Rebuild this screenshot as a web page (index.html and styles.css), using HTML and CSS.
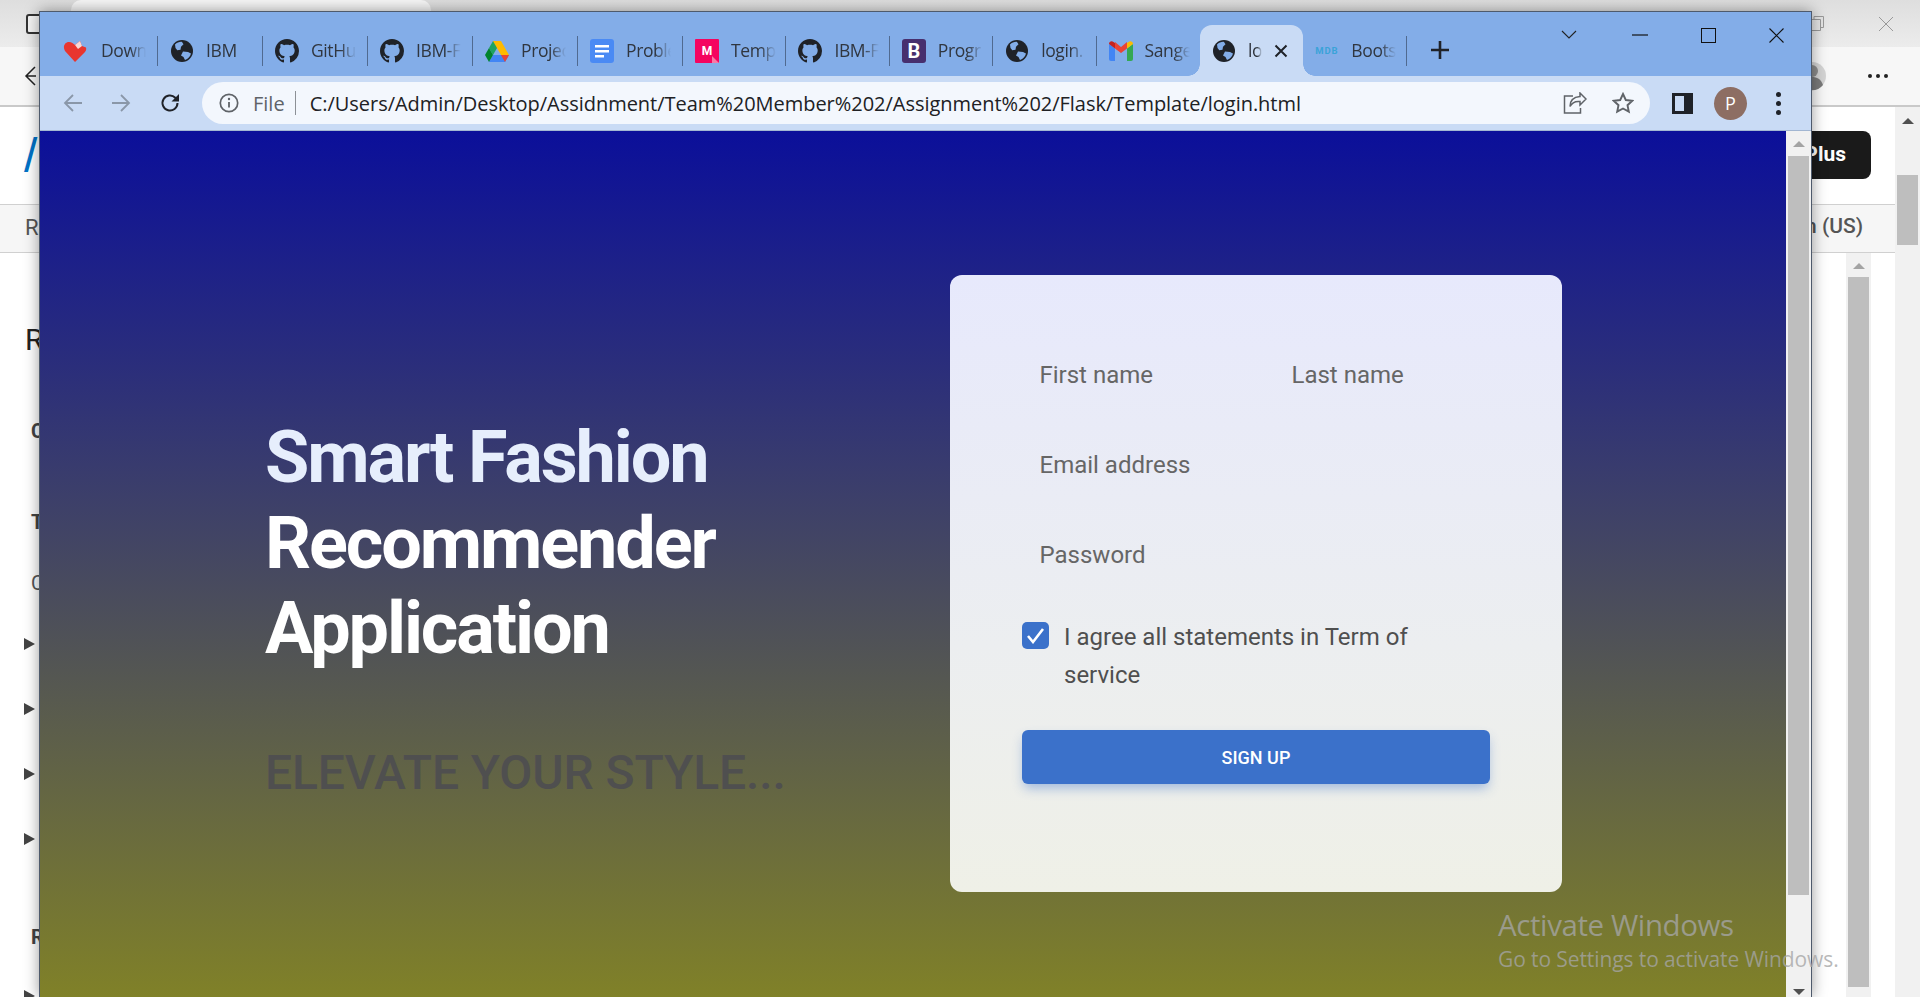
FILE: index.html
```html
<!DOCTYPE html>
<html lang="en">
<head>
  <meta charset="UTF-8" />
  <title>login.html</title>
  <link rel="stylesheet" href="styles.css">
</head>
<body>
  <svg class="defs" width="0" height="0">
    <symbol id="globe" viewBox="0 0 24 24">
      <circle cx="12" cy="12" r="11" fill="#1f2228"/>
      <path d="M5 5.500c2-2 5-3 7-2.600l1.500 2.400-2.500 2.400-.5 3-3.200.5L5.500 9z" fill="#83ade8"/>
      <path d="M13 12.500l5 .5 3 1.500c-.8 3-3 5.500-6 6.500l-1.500-3-2.500-1.500z" fill="#83ade8"/>
    </symbol>
    <symbol id="github" viewBox="0 0 16 16">
      <path fill="#1f2228" d="M8 0C3.580 0 0 3.580 0 8c0 3.540 2.290 6.530 5.470 7.590.4.070.55-.17.55-.38 0-.19-.01-.82-.01-1.490-2.010.37-2.530-.49-2.690-.94-.09-.23-.48-.94-.82-1.130-.28-.15-.68-.52-.01-.53.63-.01 1.080.58 1.230.82.720 1.210 1.870.87 2.330.66.070-.52.28-.87.510-1.070-1.780-.2-3.640-.89-3.640-3.950 0-.87.31-1.590.82-2.150-.08-.2-.36-1.020.08-2.120 0 0 .67-.21 2.200.82.640-.18 1.320-.27 2-.27s1.360.09 2 .27c1.530-1.040 2.200-.82 2.200-.82.440 1.100.16 1.920.08 2.120.51.56.82 1.270.82 2.150 0 3.070-1.870 3.750-3.650 3.950.29.25.54.73.54 1.480 0 1.070-.01 1.930-.01 2.200 0 .21.15.46.55.38A8.010 8.010 0 0 0 16 8c0-4.420-3.580-8-8-8z"/>
    </symbol>
  </svg>

  <div class="desk">
    <!-- window behind -->
    <div class="back">
      <div class="back-top">
        <div class="back-panel-icon"></div>
        <div class="back-tab"></div>
        <svg class="back-restore" width="13" height="15" viewBox="0 0 13 15"><path d="M.5 3.500h9v11h-9zM3 3.500V.5h9.500v11H9.500" fill="none" stroke="#999"/></svg>
        <svg class="back-close" width="16" height="16" viewBox="0 0 16 16"><path d="M1 1l14 14M15 1L1 15" stroke="#999" stroke-width="1"/></svg>
      </div>
      <div class="back-toolbar">
        <svg width="12" height="20" viewBox="0 0 12 20"><path d="M11 1L2 10l9 9M2 10h10" fill="none" stroke="#222" stroke-width="1.500"/></svg>
        <div class="back-right">
          <svg width="28" height="36" viewBox="0 0 28 36"><circle cx="14" cy="18" r="14" fill="#d4d4d4"/><circle cx="14" cy="13" r="6" fill="#8c8c8c"/><path d="M3 27c2-6 6-8 11-8s9 2 11 8a14 14 0 0 1-22 0z" fill="#7a7a7a"/></svg>
          <div class="back-dots"><i></i><i></i><i></i></div>
        </div>
      </div>
      <div class="back-body">
        <div class="back-content">
          <div class="back-header">
            <span class="back-logo">/</span>
            <span class="back-plus">Plus</span>
          </div>
          <div class="back-sub">
            <span>R</span>
            <span class="back-lang">n (US)</span>
          </div>
          <div class="back-main">
            <div class="back-article">
              <div class="art-title">R</div>
              <div class="art-head mt-c">C</div>
              <div class="art-head mt-t">T</div>
              <div class="art-text">C</div>
              <div class="art-tri first"></div>
              <div class="art-tri"></div>
              <div class="art-tri"></div>
              <div class="art-tri"></div>
              <div class="art-head mt-r">R</div>
              <div class="art-tri last"></div>
            </div>
            <div class="back-inner-scroll">
              <span class="arrow-up light"></span>
              <div class="inner-thumb"></div>
            </div>
            <div class="back-gutter"></div>
          </div>
        </div>
        <div class="back-scroll">
          <span class="arrow-up dark"></span>
          <div class="back-thumb"></div>
        </div>
      </div>
    </div>

    <!-- chrome window -->
    <div class="win">
      <div class="strip">
        <div class="tab">
          <svg class="fav fav-heart" viewBox="0 0 24 24"><path d="M12 23L2 12C-.5 8 1.500 3 6 3c2.500 0 4.500 1.500 6 3l5-4 2 5 4 1.500c.5 2 0 3-1 4.500z" fill="#e8352e"/><path d="M12 6l5-4 2 5-4 3z" fill="#f8d7d5"/></svg>
          <span class="tab-title">Down</span>
        </div>
        <div class="tab"><svg class="fav"><use href="#globe"/></svg><span class="tab-title">IBM</span></div>
        <div class="tab"><svg class="fav"><use href="#github"/></svg><span class="tab-title">GitHu</span></div>
        <div class="tab"><svg class="fav"><use href="#github"/></svg><span class="tab-title">IBM-F</span></div>
        <div class="tab">
          <svg class="fav" viewBox="0 0 24 22"><path d="M8 1h8l-8 14-4-7z" fill="#1ea362"/><path d="M16 1l8 14h-8L8 1z" fill="#ffba00"/><path d="M8 15h16l-4 7H4z" fill="#4285f4"/><path d="M0 15l4-7 4 7-4 7z" fill="#00832d"/><path d="M16 15h8l-4 7z" fill="#ea4335"/></svg>
          <span class="tab-title">Projec</span>
        </div>
        <div class="tab">
          <svg class="fav" viewBox="0 0 24 24"><rect width="24" height="24" rx="3" fill="#4a8af4"/><path d="M5 6h14v2.500H5zM5 11h14v2.500H5zM5 16h9v2.500H5z" fill="#fff"/></svg>
          <span class="tab-title">Proble</span>
        </div>
        <div class="tab">
          <span class="fav-box fav-mural">M</span>
          <span class="tab-title">Temp</span>
        </div>
        <div class="tab"><svg class="fav"><use href="#github"/></svg><span class="tab-title">IBM-F</span></div>
        <div class="tab">
          <span class="fav-box fav-boot">B</span>
          <span class="tab-title">Progr</span>
        </div>
        <div class="tab"><svg class="fav"><use href="#globe"/></svg><span class="tab-title">login.</span></div>
        <div class="tab no-sep">
          <svg class="fav" viewBox="0 0 24 20"><path d="M2 20a2 2 0 0 1-2-2V3l6 4.500V20z" fill="#4285f4"/><path d="M18 20V7.500L24 3v15a2 2 0 0 1-2 2z" fill="#34a853"/><path d="M6 7.500L12 12l6-4.500V1l-6 5-6-5z" fill="#ea4335"/><path d="M0 3c0-2.500 2.800-3.500 4.500-2L6 2v5.500z" fill="#c5221f"/><path d="M18 2l1.500-1C21.200-.5 24 .5 24 3l-6 4.500z" fill="#fbbc04"/></svg>
          <span class="tab-title">Sange</span>
        </div>
        <div class="tab active">
          <svg class="fav"><use href="#globe"/></svg>
          <span class="tab-title short">lo</span>
          <svg class="tab-x" width="14" height="14" viewBox="0 0 14 14"><path d="M1.500 1.500l11 11M12.500 1.500l-11 11" stroke="#1f2228" stroke-width="2"/></svg>
        </div>
        <div class="tab">
          <span class="fav-mdb">MDB</span>
          <span class="tab-title">Boots</span>
        </div>
        <svg class="newtab" width="18" height="18" viewBox="0 0 18 18"><path d="M9 0v18M0 9h18" stroke="#1f2228" stroke-width="2.600"/></svg>
        <div class="controls">
          <div class="ctl ctl-chev"><svg width="16" height="10" viewBox="0 0 16 10"><path d="M1 1l7 7 7-7" fill="none" stroke="#222" stroke-width="1.100"/></svg></div>
          <div class="ctl"><svg width="16" height="2" viewBox="0 0 16 2"><path d="M0 1h16" stroke="#111" stroke-width="1.200"/></svg></div>
          <div class="ctl"><svg width="15" height="15" viewBox="0 0 15 15"><rect x=".5" y=".5" width="14" height="14" fill="none" stroke="#111"/></svg></div>
          <div class="ctl"><svg width="15" height="15" viewBox="0 0 15 15"><path d="M.5.5l14 14M14.500.5l-14 14" stroke="#111" stroke-width="1.100"/></svg></div>
        </div>
      </div>

      <div class="toolbar">
        <div class="nav-btns">
          <svg width="20" height="20" viewBox="0 0 20 20"><path d="M19 10H2M10 2l-8 8 8 8" fill="none" stroke="#8a97a8" stroke-width="1.800"/></svg>
          <svg width="20" height="20" viewBox="0 0 20 20"><path d="M1 10h17M10 2l8 8-8 8" fill="none" stroke="#8a97a8" stroke-width="1.800"/></svg>
          <svg width="22" height="22" viewBox="0 0 22 22"><path d="M18.500 11a7.500 7.500 0 1 1-2.200-5.300L19 8.200" fill="none" stroke="#1f2228" stroke-width="2"/><path d="M20 2v7.500h-7.500z" fill="#1f2228"/></svg>
        </div>
        <div class="omni">
          <svg class="omni-info" width="20" height="20" viewBox="0 0 20 20"><circle cx="10" cy="10" r="8.700" fill="none" stroke="#5f6368" stroke-width="1.700"/><path d="M10 9v5.500" stroke="#5f6368" stroke-width="1.800"/><circle cx="10" cy="6" r="1.200" fill="#5f6368"/></svg>
          <span class="omni-file">File</span>
          <span class="omni-sep"></span>
          <span class="omni-url">C:/Users/Admin/Desktop/Assidnment/Team%20Member%202/Assignment%202/Flask/Template/login.html</span>
          <svg class="omni-share" width="24" height="22" viewBox="0 0 24 22"><path d="M17 1l6 6-6 6V9.500c-4-.5-8 1-10 5 0-6 4-9.500 10-10zM10 4H1.500v17h16v-5" fill="none" stroke="#5f6368" stroke-width="1.500"/></svg>
          <svg class="omni-star" width="22" height="22" viewBox="0 0 22 22"><path d="M11 2l2.800 6 6.500.8-4.800 4.400 1.300 6.500L11 16.500l-5.800 3.200 1.300-6.500-4.800-4.400L8.200 8z" fill="none" stroke="#5f6368" stroke-width="1.900"/></svg>
        </div>
        <div class="tool-right">
          <svg width="21" height="21" viewBox="0 0 21 21"><path d="M0 0h21v21H0zM3 3v15h9V3z" fill="#1f2228" fill-rule="evenodd"/></svg>
          <span class="avatar">P</span>
          <div class="kebab"><i></i><i></i><i></i></div>
        </div>
      </div>

      <div class="viewport">
        <main class="page">
          <section class="hero">
            <h1 class="hero-title"><span class="hero-first">Smart Fashion</span><br>Recommender<br>Application</h1>
            <h2 class="hero-sub">ELEVATE YOUR STYLE...</h2>
          </section>
          <form class="card">
            <div class="row-two">
              <input class="field" type="text" placeholder="First name">
              <input class="field" type="text" placeholder="Last name">
            </div>
            <input class="field" type="email" placeholder="Email address">
            <input class="field" type="password" placeholder="Password">
            <div class="agree">
              <span class="check"><svg width="19" height="17" viewBox="0 0 19 17"><path d="M2 9l5 6L17 2" fill="none" stroke="#fff" stroke-width="2.600"/></svg></span>
              <span class="agree-text">I agree all statements in Term of service</span>
            </div>
            <button class="signup" type="button">Sign up</button>
          </form>
        </main>
        <div class="page-scroll">
          <span class="arrow-up light"></span>
          <div class="page-thumb"></div>
          <span class="arrow-down"></span>
        </div>
      </div>
    </div>

    <div class="activate">
      <div class="activate-big">Activate Windows</div>
      <div class="activate-small">Go to Settings to activate Windows.</div>
    </div>
  </div>
</body>
</html>
```

FILE: styles.css
```css
* { box-sizing: border-box; }
html, body { margin: 0; height: 100%; overflow: hidden; }
body { font-family: Roboto, sans-serif; background: #fff; }
.defs { position: absolute; }
.desk { position: relative; width: 1920px; height: 997px; overflow: hidden; }

/* window behind */
.back { height: 997px; display: flex; flex-direction: column; background: #fff; }
.back-top { height: 47px; flex: none; display: flex; background: linear-gradient(#dedede, #ececec); position: relative; }
.back-panel-icon { width: 20px; height: 20px; margin: 14px 0 0 26px; border: 2px solid #333; border-radius: 3px; background: #f4f4f4; }
.back-tab { width: 360px; height: 47px; margin-left: 25px; background: #f6f6f6; border-radius: 10px 10px 0 0; }
.back-restore { margin: 16px 0 0 1380px; }
.back-close { margin: 16px 0 0 54px; }
.back-toolbar { height: 60px; flex: none; display: flex; align-items: center; justify-content: space-between; padding: 0 32px 0 24px; background: #f7f7f7; border-bottom: 2px solid #c9c9c9; }
.back-right { display: flex; align-items: center; gap: 42px; }
.back-dots { display: flex; gap: 4px; }
.back-dots i { width: 4px; height: 4px; border-radius: 50%; background: #222; }
.back-body { flex: 1; display: flex; min-height: 0; }
.back-content { flex: 1; display: flex; flex-direction: column; min-width: 0; }
.back-header { height: 97px; flex: none; display: flex; align-items: center; justify-content: space-between; padding: 0 24px; }
.back-logo { font: 48px "Liberation Sans", sans-serif; color: #0072c6; }
.back-plus { width: 120px; height: 48px; margin-top: -1px; padding: 0 25px 2px 0; display: flex; align-items: center; justify-content: flex-end; background: #1a1a1a; color: #fff; font-size: 21px; font-weight: 700; border-radius: 8px; }
.back-sub { height: 49px; flex: none; display: flex; align-items: center; justify-content: space-between; padding: 0 32px 3px 25px; background: #f6f6f6; border-top: 1px solid #d0d0d0; border-bottom: 1px solid #d0d0d0; color: #555; font-size: 22px; }
.back-lang { font-size: 21px; font-weight: 500; margin-bottom: 2px; }
.back-main { flex: 1; display: flex; min-height: 0; }
.back-article { flex: 1; padding-left: 24px; }
.art-title { margin: 67px 0 0 1px; font-size: 30px; line-height: 40px; color: #222; }
.art-head { margin-left: 7px; font-size: 20px; line-height: 30px; font-weight: 700; color: #444; }
.mt-c { margin-top: 56px; }
.mt-t { margin-top: 61px; }
.mt-r { margin-top: 77px; }
.art-text { margin: 31px 0 0 7px; font-size: 20px; line-height: 30px; color: #555; }
.art-tri { width: 0; height: 0; margin-top: 53px; border-left: 11px solid #444; border-top: 6px solid transparent; border-bottom: 6px solid transparent; }
.art-tri.first { margin-top: 40px; }
.art-tri.last { margin-top: 38px; }
.back-inner-scroll { width: 25px; flex: none; padding-top: 10px; display: flex; flex-direction: column; align-items: center; background: #f1f1f1; }
.inner-thumb { width: 21px; height: 710px; margin-top: 8px; background: #bebebe; }
.back-gutter { width: 24px; flex: none; }
.back-scroll { width: 25px; flex: none; padding-top: 11px; display: flex; flex-direction: column; align-items: center; background: #f1f1f1; }
.back-thumb { width: 21px; height: 70px; margin-top: 51px; background: #bebebe; }
.arrow-up { width: 0; height: 0; border-left: 6px solid transparent; border-right: 6px solid transparent; border-bottom: 6px solid #505050; }
.arrow-up.light { border-bottom-color: #a3a3a3; }
.arrow-down { width: 0; height: 0; margin-top: auto; margin-bottom: 2px; border-left: 6px solid transparent; border-right: 6px solid transparent; border-top: 6px solid #505050; }

/* browser window */
.win { position: absolute; left: 39px; top: 11px; width: 1773px; height: 986px; display: flex; flex-direction: column; border: 1px solid #4e5a6c; border-bottom: 0; box-shadow: 0 0 14px rgba(0,0,0,0.4); font-family: "Open Sans", sans-serif; }
.strip { height: 64px; flex: none; display: flex; align-items: flex-end; padding-left: 13px; background: #83ade8; }
.tab { position: relative; width: 103.400px; height: 51px; flex: none; display: flex; align-items: center; gap: 12px; padding-left: 12px; }
.tab:nth-child(-n+6) { width: 105px; }
.tab::after { content: ""; position: absolute; right: 0; top: 11px; height: 30px; width: 1px; background: #506a90; }
.tab.no-sep::after { display: none; }
.tab.active { background: #c9dbf5; border-radius: 12px 12px 0 0; }
.tab.active::before, .tab.active::after { content: ""; position: absolute; top: auto; bottom: 0; width: 12px; height: 12px; }
.tab.active::before { left: -12px; background: radial-gradient(circle at 0 0, transparent 11.500px, #c9dbf5 12px); }
.tab.active::after { right: -12px; background: radial-gradient(circle at 100% 0, transparent 11.500px, #c9dbf5 12px); }
.tab.active .tab-x { margin-left: auto; margin-right: 15px; }
.tab-x { flex: none; }
.fav { width: 24px; height: 24px; flex: none; }
.fav-heart { margin-left: -2px; margin-right: 2px; }
.tab-title { width: 45px; margin-top: -2px; overflow: hidden; white-space: nowrap; font-size: 17.500px; letter-spacing: -0.4px; color: #30363f; -webkit-mask-image: linear-gradient(90deg, #000 65%, transparent); mask-image: linear-gradient(90deg, #000 65%, transparent); }
.tab-title.short { width: 14px; }
.fav-box { position: relative; width: 24px; height: 24px; flex: none; display: flex; align-items: center; justify-content: center; border-radius: 3px; font-family: Roboto, sans-serif; font-weight: 700; color: #fff; }
.fav-mural { background: #f5045f; font-size: 12px; border-radius: 1px; }
.fav-mural::after { content: ""; position: absolute; right: 0; bottom: 0; border-left: 7px solid #f77aa6; border-top: 7px solid transparent; border-bottom: 0; }
.fav-boot { background: #472f6e; font-size: 20px; }
.fav-mdb { width: 24px; flex: none; font: 700 9.500px Roboto, sans-serif; letter-spacing: 0.8px; color: #3aa3d8; white-space: nowrap; }
.newtab { margin: 0 0 17px 24px; flex: none; }
.controls { display: flex; margin-left: auto; align-self: flex-start; margin-right: 1px; }
.ctl { width: 68px; height: 46px; display: flex; align-items: center; justify-content: center; }
.ctl-chev { width: 74px; }
.toolbar { height: 55px; flex: none; display: flex; align-items: center; background: #c9dbf5; border-bottom: 1px solid #a2b6d2; }
.nav-btns { display: flex; align-items: center; width: 162px; padding-left: 23px; gap: 28px; }
.omni { width: 1448px; height: 42px; display: flex; align-items: center; padding-left: 17px; border-radius: 21px; background: #f3f7fd; }
.omni-info { flex: none; }
.omni-file { margin-left: 14px; font-size: 20px; color: #5f6368; }
.omni-sep { width: 1px; height: 24px; margin: 0 14px 0 10px; background: #8c9096; }
.omni-url { white-space: nowrap; font-size: 20px; letter-spacing: -0.03px; color: #202124; }
.omni-share { margin-left: auto; flex: none; }
.omni-star { margin: 0 16px 0 25px; flex: none; }
.tool-right { display: flex; align-items: center; margin-left: 22px; }
.avatar { width: 33px; height: 33px; margin-left: 21px; display: flex; align-items: center; justify-content: center; border-radius: 50%; background: #8d6e63; color: #fff; font-size: 18px; }
.kebab { display: flex; flex-direction: column; gap: 4px; margin-left: 29px; }
.kebab i { width: 5px; height: 5px; border-radius: 50%; background: #1f2228; }
.viewport { flex: 1; display: flex; min-height: 0; }
.page { flex: 1; display: flex; background: linear-gradient(#0b0f9a, #808128); }
.page-scroll { width: 25px; flex: none; padding-top: 10px; display: flex; flex-direction: column; align-items: center; background: #f1f1f1; }
.page-thumb { width: 21px; height: 739px; margin-top: 9px; background: #bebebe; }

/* hero */
.hero { width: 910px; flex: none; padding: 284px 0 0 225px; }
.hero-title { margin: 0; font-size: 72px; line-height: 85.500px; font-weight: 700; letter-spacing: -2.100px; color: #fff; font-family: Roboto, sans-serif; }
.hero-first { color: #e6eefc; }
.hero-sub { margin: 72px 0 0; font-size: 48px; line-height: 58px; font-weight: 500; letter-spacing: -0.1px; color: #4f4f4f; font-family: Roboto, sans-serif; }

/* signup card */
.card { width: 612px; height: 617px; flex: none; margin-top: 144px; padding: 73px 72px 0 72px; border-radius: 12px; background: linear-gradient(#e7e9fc, #eceef0 60%, #eff0e7); font-family: Roboto, sans-serif; }
.row-two { display: flex; gap: 36px; }
.field { display: block; width: 100%; height: 54px; margin-bottom: 36px; padding: 0 17.500px; border: 0; outline: 0; background: transparent; font: 24px Roboto, sans-serif; color: #4f4f4f; }
.field::placeholder { color: #666; opacity: 1; }
.agree { display: flex; align-items: flex-start; gap: 15px; }
.check { width: 27px; height: 27px; flex: none; margin-top: 4px; display: flex; align-items: center; justify-content: center; border-radius: 5px; background: #3b71ca; }
.agree-text { max-width: 390px; font-size: 24px; line-height: 38px; color: #4f4f4f; }
.signup { display: block; width: 468px; height: 54px; margin-top: 36px; border: 0; border-radius: 6px; background: #3b71ca; color: #fff; font: 500 18px Roboto, sans-serif; text-transform: uppercase; box-shadow: 0 6px 12px -2px rgba(59,113,202,0.45); }

.activate { position: absolute; left: 1498px; top: 905px; color: rgba(165,165,165,0.78); font-family: "Open Sans", sans-serif; white-space: nowrap; }
.activate-big { font-size: 29.500px; line-height: 40px; letter-spacing: -0.4px; }
.activate-small { font-size: 21px; line-height: 28px; letter-spacing: -0.1px; }
```
